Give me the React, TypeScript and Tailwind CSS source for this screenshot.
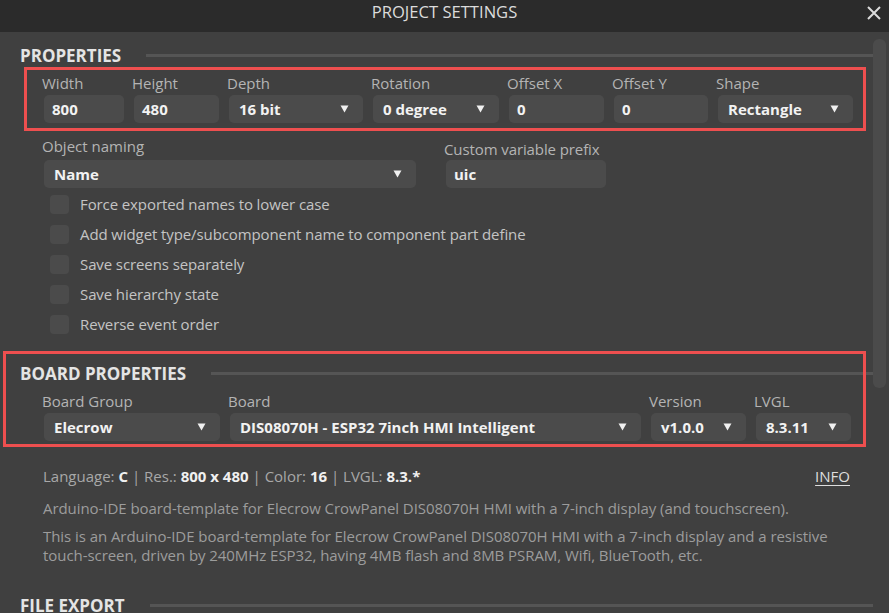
import React from 'react'

const font = { fontFamily: '"Open Sans", "Noto Sans", sans-serif' }

function Arrow() {
  return (
    <svg width="9" height="8" viewBox="0 0 9 8" className="shrink-0">
      <path d="M0.5 0.5 H8.5 L4.5 7.5 Z" fill="#f0f0f0" />
    </svg>
  )
}

function Select({ value, w }: { value: string; w: string }) {
  return (
    <div className={`${w} h-[28px] rounded-[5px] bg-[#4b4b4b] flex items-center justify-between pl-[10px] pr-[14px]`}>
      <span className="text-[15px] font-bold text-[#f2f2f2] leading-none whitespace-nowrap">{value}</span>
      <Arrow />
    </div>
  )
}

function TextInput({ value, w }: { value: string; w: string }) {
  return (
    <div className={`${w} h-[28px] rounded-[5px] bg-[#4b4b4b] flex items-center pl-[8px]`}>
      <span className="text-[15px] font-bold text-[#f2f2f2] leading-none">{value}</span>
    </div>
  )
}

function Field({ label, children }: { label: string; children: React.ReactNode }) {
  return (
    <div className="flex flex-col">
      <div className="h-[20px] -ml-[2px] text-[15px] leading-[20px] text-[#b4b4b4] whitespace-nowrap">{label}</div>
      <div className="mt-[2px]">{children}</div>
    </div>
  )
}

function Heading({ title, className = '' }: { title: string; className?: string }) {
  return (
    <div className={`flex items-center h-[24px] pl-[20px] ${className}`}>
      <span className="text-[17px] font-bold leading-[24px] text-[#e4e4e4] whitespace-nowrap">{title}</span>
      <div className="flex-1 h-[3px] bg-[#555555] ml-[25px] -mt-[2px]" />
    </div>
  )
}

const checks = [
  'Force exported names to lower case',
  'Add widget type/subcomponent name to component part define',
  'Save screens separately',
  'Save hierarchy state',
  'Reverse event order',
]

export default function App() {
  return (
    <div className="w-[889px] h-[613px] overflow-hidden bg-[#404040]" style={font}>
      {/* Title bar */}
      <div className="relative h-[32px] bg-[#2b2b2b] flex justify-center pt-[1px]">
        <span className="text-[16.6px] leading-[22px] text-[#dcdcdc]">PROJECT SETTINGS</span>
        <svg className="absolute right-[7px] top-[5px]" width="16" height="16" viewBox="0 0 16 16">
          <path d="M2 2 L14 14 M14 2 L2 14" stroke="#dcdcdc" strokeWidth="2" />
        </svg>
      </div>

      <div className="flex h-[581px]">
        <div className="flex-1 min-w-0">
          <Heading title="PROPERTIES" className="mt-[12px]" />

          {/* Display properties */}
          <div className="relative -mt-[1px] pt-[6px] pb-[8px] pl-[44px]">
            <div className="flex gap-[10px]">
              <Field label="Width"><TextInput value="800" w="w-[80px]" /></Field>
              <Field label="Height"><TextInput value="480" w="w-[85px]" /></Field>
              <Field label="Depth"><Select value="16 bit" w="w-[134px]" /></Field>
              <Field label="Rotation"><Select value="0 degree" w="w-[126px]" /></Field>
              <Field label="Offset X"><TextInput value="0" w="w-[95px]" /></Field>
              <Field label="Offset Y"><TextInput value="0" w="w-[94px]" /></Field>
              <Field label="Shape"><Select value="Rectangle" w="w-[135px]" /></Field>
            </div>
            <div className="absolute left-[24px] right-[7px] top-0 bottom-0 border-[3px] border-[#ee4f4f] pointer-events-none" />
          </div>

          {/* Naming */}
          <div className="flex gap-[30px] pl-[44px] mt-[5px]">
            <div className="flex flex-col">
              <div className="h-[20px] -ml-[2px] text-[15px] leading-[20px] text-[#b4b4b4]">Object naming</div>
              <div className="mt-[4px]"><Select value="Name" w="w-[372px]" /></div>
            </div>
            <div className="flex flex-col">
              <div className="h-[20px] -ml-[2px] mt-[3px] text-[15px] leading-[20px] text-[#b4b4b4] tracking-[-0.1px]">Custom variable prefix</div>
              <div className="mt-[1px]"><TextInput value="uic" w="w-[160px]" /></div>
            </div>
          </div>

          <div className="mt-[1px] pl-[50px]">
            {checks.map((c) => (
              <div key={c} className="h-[30px] flex items-center">
                <div className="w-[19px] h-[19px] rounded-[4px] bg-[#4b4b4b]" />
                <span className="ml-[11px] text-[15px] text-[#c4c4c4] tracking-[-0.1px] whitespace-nowrap">{c}</span>
              </div>
            ))}
          </div>

          {/* Board properties */}
          <div className="relative mt-[12px] pt-[11px] pb-[6px]">
            <Heading title="BOARD PROPERTIES" />
            <div className="flex gap-[10px] pl-[44px] mt-[5px]">
              <Field label="Board Group"><Select value="Elecrow" w="w-[176px]" /></Field>
              <Field label="Board"><Select value="DIS08070H - ESP32 7inch HMI Intelligent" w="w-[411px]" /></Field>
              <Field label="Version"><Select value="v1.0.0" w="w-[95px]" /></Field>
              <Field label="LVGL"><Select value="8.3.11" w="w-[95px]" /></Field>
            </div>
            <div className="absolute left-[3px] right-[7px] top-0 bottom-0 border-[3px] border-[#ee4f4f] pointer-events-none" />
          </div>

          <div className="mt-[19px] pl-[43px] pr-[23px] flex justify-between h-[20px] text-[15px] leading-[20px]">
            <div className="text-[#a8a8a8] whitespace-nowrap">
              Language: <b className="text-[#f0f0f0]">C</b> | Res.: <b className="text-[#f0f0f0]">800 x 480</b> | Color:{' '}
              <b className="text-[#f0f0f0]">16</b> | LVGL: <b className="text-[#f0f0f0]">8.3.*</b>
            </div>
            <span className="text-[#dedede] underline underline-offset-[3px]">INFO</span>
          </div>

          <p className="mt-[12px] pl-[43px] pr-[23px] text-[15px] leading-[20px] text-[#9c9c9c] tracking-[-0.06px]">
            Arduino-IDE board-template for Elecrow CrowPanel DIS08070H HMI with a 7-inch display (and touchscreen).
          </p>
          <p className="mt-[9px] pl-[43px] pr-[23px] text-[15px] leading-[19px] text-[#9c9c9c] tracking-[-0.06px]">
            This is an Arduino-IDE board-template for Elecrow CrowPanel DIS08070H HMI with a 7-inch display and a resistive
            touch-screen, driven by 240MHz ESP32, having 4MB flash and 8MB PSRAM, Wifi, BlueTooth, etc.
          </p>

          <Heading title="FILE EXPORT" className="mt-[29px]" />
        </div>

        {/* Scrollbar */}
        <div className="w-[16px] pt-[7px] flex">
          <div className="w-[13px] h-[349px] rounded-[6px] bg-[#4b4b4b]" />
          <div className="w-[3px] h-full" />
        </div>
      </div>
    </div>
  )
}
